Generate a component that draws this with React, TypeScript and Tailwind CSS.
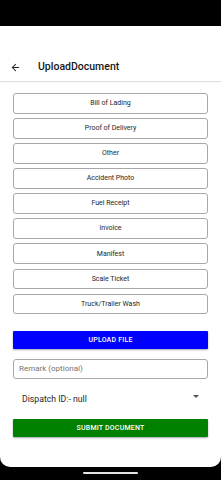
import { ArrowLeft } from 'lucide-react';

const docTypes = [
    'Bill of Lading',
    'Proof of Delivery',
    'Other',
    'Accident Photo',
    'Fuel Receipt',
    'Invoice',
    'Manifest',
    'Scale Ticket',
    'Truck/Trailer Wash',
];

export default function App() {
    return (
        <div className="w-[221px] h-[480px] bg-black flex flex-col overflow-hidden" style={{ fontFamily: 'Roboto, "Liberation Sans", sans-serif' }}>
            {/* Status bar */}
            <div className="h-[26px] shrink-0 bg-black" />

            {/* Screen */}
            <div className="h-[441px] shrink-0 bg-white rounded-b-[10px] flex flex-col">
                {/* App bar */}
                <div className="h-[55px] shrink-0 flex items-end shadow-[0_1px_1px_rgba(0,0,0,0.12)]">
                    <div className="h-[28px] w-full flex items-center">
                        <ArrowLeft size={11} strokeWidth={2.2} className="ml-[10px] text-neutral-800" />
                        <span className="ml-[17px] text-[10.5px] font-medium text-neutral-900">UploadDocument</span>
                    </div>
                </div>

                <div className="px-[13px] pt-[12px] flex flex-col">
                    {/* Document types */}
                    <div className="flex flex-col gap-[4.4px]">
                        {docTypes.map((t) => (
                            <button
                                key={t}
                                className="h-[20.7px] w-full rounded-[3px] border border-[#a8a8a8] bg-white text-[7px] text-neutral-800 flex items-center justify-center"
                            >
                                {t}
                            </button>
                        ))}
                    </div>

                    <button className="mt-[17px] h-[18px] w-full bg-[#0000ff] text-white text-[7px] font-medium uppercase tracking-[0.2px] rounded-[1px] shadow-[0_1px_2px_rgba(0,0,0,0.35)] flex items-center justify-center">
                        Upload File
                    </button>

                    <div className="mt-[10px] h-[20px] w-full rounded-[3px] border border-[#a8a8a8] flex items-center px-[5px]">
                        <span className="text-[8px] text-neutral-500">Remark (optional)</span>
                    </div>

                    {/* Dispatch select */}
                    <div className="h-[40px] flex items-center justify-between pl-[9px] pr-[9px]">
                        <span className="text-[8.7px] text-neutral-800">Dispatch ID:- null</span>
                        <span className="w-0 h-0 border-l-[3px] border-r-[3px] border-t-[3px] border-l-transparent border-r-transparent border-t-neutral-600 -mt-[6px]" />
                    </div>

                    <button className="h-[17.5px] w-full bg-[#008000] text-white text-[7px] font-medium uppercase tracking-[0.2px] rounded-[1px] shadow-[0_1px_2px_rgba(0,0,0,0.35)] flex items-center justify-center">
                        Submit Document
                    </button>
                </div>
            </div>

            {/* Home indicator */}
            <div className="flex-1 flex items-start justify-center pt-[5px]">
                <div className="w-[55px] h-[2px] rounded-full bg-neutral-200" />
            </div>
        </div>
    );
}
